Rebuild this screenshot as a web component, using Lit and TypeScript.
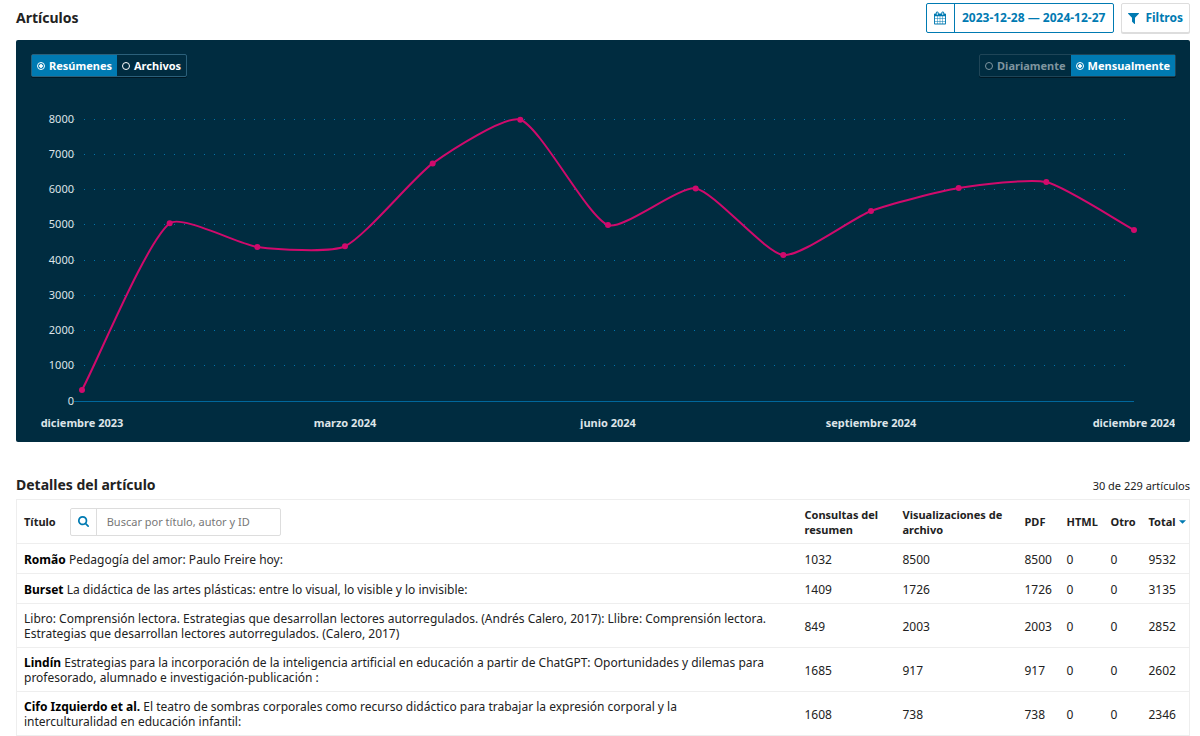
import { LitElement, html, svg, css } from "lit";
import { customElement, property, state } from "lit/decorators.js";

interface Article {
  authors: string;
  title: string;
  abstracts: number;
  files: number;
  pdf: number;
  html: number;
  other: number;
  total: number;
}

const VALUES = [310, 5040, 4370, 4390, 6740, 7980, 4990, 6030, 4140, 5390, 6040, 6210, 4850];
const MONTHS = ["diciembre 2023", "", "", "marzo 2024", "", "", "junio 2024", "", "", "septiembre 2024", "", "", "diciembre 2024"];

const ARTICLES: Article[] = [
  { authors: "Romão", title: "Pedagogía del amor: Paulo Freire hoy:", abstracts: 1032, files: 8500, pdf: 8500, html: 0, other: 0, total: 9532 },
  { authors: "Burset", title: "La didáctica de las artes plásticas: entre lo visual, lo visible y lo invisible:", abstracts: 1409, files: 1726, pdf: 1726, html: 0, other: 0, total: 3135 },
  { authors: "", title: "Libro: Comprensión lectora. Estrategias que desarrollan lectores autorregulados. (Andrés Calero, 2017): Llibre: Comprensión lectora. Estrategias que desarrollan lectores autorregulados. (Calero, 2017)", abstracts: 849, files: 2003, pdf: 2003, html: 0, other: 0, total: 2852 },
  { authors: "Lindín", title: "Estrategias para la incorporación de la inteligencia artificial en educación a partir de ChatGPT: Oportunidades y dilemas para profesorado, alumnado e investigación-publicación :", abstracts: 1685, files: 917, pdf: 917, html: 0, other: 0, total: 2602 },
  { authors: "Cifo Izquierdo et al.", title: "El teatro de sombras corporales como recurso didáctico para trabajar la expresión corporal y la interculturalidad en educación infantil:", abstracts: 1608, files: 738, pdf: 738, html: 0, other: 0, total: 2346 },
];

@customElement("line-chart")
export class LineChart extends LitElement {
  @property({ attribute: false }) values: number[] = [];
  @property({ attribute: false }) labels: string[] = [];
  @state() private width = 1144;
  private observer?: ResizeObserver;

  static styles = css`
    :host { display: block; }
    svg { display: block; width: 100%; }
    .tick { font-size: 11px; fill: #dde4e8; text-anchor: end; }
    .month { font-size: 11px; font-weight: 700; fill: #dde4e8; text-anchor: middle; }
    .grid { stroke: #0075ad; stroke-width: 1; stroke-dasharray: 1 9; }
    .axis { stroke: #00679c; stroke-width: 1; }
    .line { stroke: #d00a6c; stroke-width: 2; fill: none; }
    .point { fill: #d00a6c; }
  `;

  connectedCallback() {
    super.connectedCallback();
    this.observer = new ResizeObserver(([entry]) => { this.width = Math.round(entry.contentRect.width); });
    this.observer.observe(this);
  }

  disconnectedCallback() {
    this.observer?.disconnect();
    super.disconnectedCallback();
  }

  private curve(pts: { x: number; y: number }[]) {
    const tension = 0.2;
    const ctrl = pts.map((p, i) => {
      const a = pts[i - 1] ?? p;
      const b = pts[i + 1] ?? p;
      const d1 = Math.hypot(p.x - a.x, p.y - a.y);
      const d2 = Math.hypot(b.x - p.x, b.y - p.y);
      const f1 = (tension * d1) / (d1 + d2);
      const f2 = (tension * d2) / (d1 + d2);
      return {
        inX: p.x - f1 * (b.x - a.x), inY: p.y - f1 * (b.y - a.y),
        outX: p.x + f2 * (b.x - a.x), outY: p.y + f2 * (b.y - a.y),
      };
    });
    return pts.map((p, i) => i === 0
      ? `M${p.x} ${p.y}`
      : `C${ctrl[i - 1].outX} ${ctrl[i - 1].outY} ${ctrl[i].inX} ${ctrl[i].inY} ${p.x} ${p.y}`).join(" ");
  }

  render() {
    const left = 51, right = this.width - 41, top = 32, bottom = 314;
    const y = (v: number) => bottom - (v / 8000) * (bottom - top);
    const pts = this.values.map((v, i) => ({ x: left + (i * (right - left)) / (this.values.length - 1), y: y(v) }));
    const ticks = [8000, 7000, 6000, 5000, 4000, 3000, 2000, 1000, 0];
    return html`
      <svg height="342" viewBox="0 0 ${this.width} 342" role="img" aria-label="Consultas mensuales">
        ${ticks.map((t) => {
          const gy = Math.floor(y(t)) + 0.5;
          return svg`
            <text class="tick" x="43" y=${gy + 3}>${t}</text>
            <line class=${t ? "grid" : "axis"} x1="43" x2=${right} y1=${gy} y2=${gy}></line>`;
        })}
        ${pts.map((p, i) => this.labels[i] ? svg`<text class="month" x=${p.x} y="340">${this.labels[i]}</text>` : null)}
        <path class="line" d=${this.curve(pts)}></path>
        ${pts.map((p) => svg`<circle class="point" cx=${p.x} cy=${p.y} r="3"></circle>`)}
      </svg>`;
  }
}

@customElement("app-root")
export class AppRoot extends LitElement {
  static styles = css`
    :host { display: block; background: #fff; color: #222; font-family: "Noto Sans", sans-serif; font-size: 12px; line-height: 15px; }
    * { box-sizing: border-box; }
    .page { padding: 3px 10px 0 16px; }
    .bar { display: flex; align-items: center; justify-content: space-between; }
    h1, h2 { margin: 0; font-size: 14px; line-height: 20px; font-weight: 700; }
    .tools { display: flex; gap: 7px; }
    button { font-family: inherit; cursor: pointer; }
    .tool { display: flex; align-items: center; height: 30px; padding: 0; background: #fff; border: 1px solid #ddd; border-radius: 2px; color: #007ab2; font-size: 12px; line-height: 16px; font-weight: 700; }
    .date { border-color: #007ab2; }
    .calendar { display: flex; align-items: center; justify-content: center; align-self: stretch; width: 28px; border-right: 1px solid #007ab2; }
    .range { padding: 0 8px 0 7px; }
    .filter { padding: 0 6px; gap: 6px; box-shadow: 0 1px 0 #ddd; }
    .chart { margin-top: 7px; padding: 14px 14px 13px 15px; background: #002c40; border-radius: 2px; color: #fff; }
    .chart line-chart { margin: 10px 1px 0 0; }
    .group { display: flex; margin: 0; padding: 0; border: 1px solid #2b607a; border-radius: 2px; box-shadow: 0 1px 0 #001824; }
    .group.dim { border-color: #1f4557; }
    .option { display: flex; align-items: center; gap: 4px; height: 21px; padding: 0 5px; font-size: 11px; line-height: 15px; font-weight: 700; }
    .option.on { background: #007ab2; }
    .option.off { color: #7f959f; }
    .option input { appearance: none; width: 8px; height: 8px; margin: 0; border: 1px solid currentColor; border-radius: 50%; color: inherit; }
    .option input:checked { background: radial-gradient(circle, #fff 60%, transparent 75%) content-box; padding: 1px; }
    .details { margin-top: 33px; }
    .count { font-size: 11px; }
    table { width: 100%; margin-top: 4px; border-collapse: collapse; border: 1px solid #eee; table-layout: fixed; }
    th, td { padding: 7px 4px 6px 7px; text-align: left; border-bottom: 1px solid #eee; vertical-align: middle; }
    th { height: 44px; padding-top: 0; padding-bottom: 0; font-size: 11px; }
    td { height: 30px; }
    td:first-child { padding-right: 26px; }
    .c-abs { width: 98px; }
    .c-files { width: 122px; }
    .c-pdf { width: 42px; }
    .c-html { width: 44px; }
    .c-other { width: 38px; }
    .c-total { width: 48px; }
    .title-head { display: flex; align-items: center; gap: 14px; }
    .search { display: flex; align-items: stretch; width: 211px; height: 28px; border: 1px solid #ddd; border-radius: 2px; }
    .search label { display: flex; align-items: center; justify-content: center; width: 26px; border-right: 1px solid #ddd; color: #007ab2; }
    .search input { flex: 1; min-width: 0; padding: 0 10px; border: 0; background: none; font-family: inherit; font-size: 11px; color: #222; }
    .search input::placeholder { color: #777; }
    .sort { display: flex; align-items: center; gap: 3px; padding: 0; border: 0; background: none; color: inherit; font-size: 11px; line-height: 15px; font-weight: 700; }
    .sort svg { flex: none; }
    .author { color: #000; }
  `;

  render() {
    return html`
      <main class="page">
        <header class="bar">
          <h1>Artículos</h1>
          <div class="tools">
            <button class="tool date">
              <span class="calendar">
                <svg width="12" height="14" viewBox="0 0 1664 1792" fill="currentColor" aria-hidden="true"><path d="M128 1664h288v-288H128v288zm352 0h320v-288H480v288zM128 1312h288V992H128v320zm352 0h320V992H480v320zM128 928h288V640H128v288zm736 736h320v-288H864v288zM480 928h320V640H480v288zm768 736h288v-288h-288v288zM864 1312h320V992H864v320zM512 448V160q0-13-9.500-22.500T480 128h-64q-13 0-22.500 9.500T384 160v288q0 13 9.500 22.500T416 480h64q13 0 22.500-9.500T512 448zm736 864h288V992h-288v320zM864 928h320V640H864v288zm384 0h288V640h-288v288zm32-480V160q0-13-9.500-22.500T1248 128h-64q-13 0-22.500 9.500T1152 160v288q0 13 9.500 22.500t22.500 9.500h64q13 0 22.500-9.500t9.500-22.500zm384-64v1280q0 52-38 90t-90 38H128q-52 0-90-38t-38-90V384q0-52 38-90t90-38h128v-96q0-66 47-113T416 0h64q66 0 113 47t47 113v96h384v-96q0-66 47-113t113-47h64q66 0 113 47t47 113v96h128q52 0 90 38t38 90z"/></svg>
              </span>
              <span class="range">2023-12-28 — 2024-12-27</span>
            </button>
            <button class="tool filter">
              <svg width="11" height="12" viewBox="0 0 1408 1536" fill="currentColor" aria-hidden="true"><path d="M1403 167q17 41-14 70L896 730v742q0 42-39 59-13 5-25 5-27 0-45-19l-256-256q-19-19-19-45V730L19 237q-31-29-14-70 17-39 59-39h1280q42 0 59 39z"/></svg>
              Filtros
            </button>
          </div>
        </header>

        <section class="chart">
          <div class="bar">
            <fieldset class="group" aria-label="Tipo">
              <label class="option on"><input type="radio" name="kind" checked>Resúmenes</label>
              <label class="option"><input type="radio" name="kind">Archivos</label>
            </fieldset>
            <fieldset class="group dim" aria-label="Intervalo">
              <label class="option off"><input type="radio" name="interval" disabled>Diariamente</label>
              <label class="option on"><input type="radio" name="interval" checked>Mensualmente</label>
            </fieldset>
          </div>
          <line-chart .values=${VALUES} .labels=${MONTHS}></line-chart>
        </section>

        <section class="details">
          <div class="bar">
            <h2>Detalles del artículo</h2>
            <span class="count">30 de 229 artículos</span>
          </div>
          <table>
            <thead>
              <tr>
                <th>
                  <div class="title-head">
                    Título
                    <div class="search">
                      <label for="search" aria-label="Buscar">
                        <svg width="11" height="11" viewBox="0 0 1664 1664" fill="currentColor" aria-hidden="true"><path d="M1152 704q0-185-131.500-316.500T704 256 387.500 387.500 256 704t131.500 316.500T704 1152t316.500-131.500T1152 704zm512 832q0 52-38 90t-90 38q-54 0-90-38l-343-342q-179 124-399 124-143 0-273.500-55.500t-225-150-150-225T0 704t55.500-273.500 150-225 225-150T704 0t273.500 55.500 225 150 150 225T1408 704q0 220-124 399l343 343q37 37 37 90z"/></svg>
                      </label>
                      <input id="search" type="search" placeholder="Buscar por título, autor y ID">
                    </div>
                  </div>
                </th>
                <th class="c-abs">Consultas del resumen</th>
                <th class="c-files">Visualizaciones de archivo</th>
                <th class="c-pdf">PDF</th>
                <th class="c-html">HTML</th>
                <th class="c-other">Otro</th>
                <th class="c-total"><button class="sort">Total<svg width="7" height="4" viewBox="0 0 8 4" aria-hidden="true"><path d="M0 0H8L4 4Z" fill="#007ab2"/></svg></button></th>
              </tr>
            </thead>
            <tbody>
              ${ARTICLES.map((a) => html`
                <tr>
                  <td>${a.authors ? html`<b class="author">${a.authors}</b> ` : null}${a.title}</td>
                  <td>${a.abstracts}</td>
                  <td>${a.files}</td>
                  <td>${a.pdf}</td>
                  <td>${a.html}</td>
                  <td>${a.other}</td>
                  <td>${a.total}</td>
                </tr>`)}
            </tbody>
          </table>
        </section>
      </main>`;
  }
}
